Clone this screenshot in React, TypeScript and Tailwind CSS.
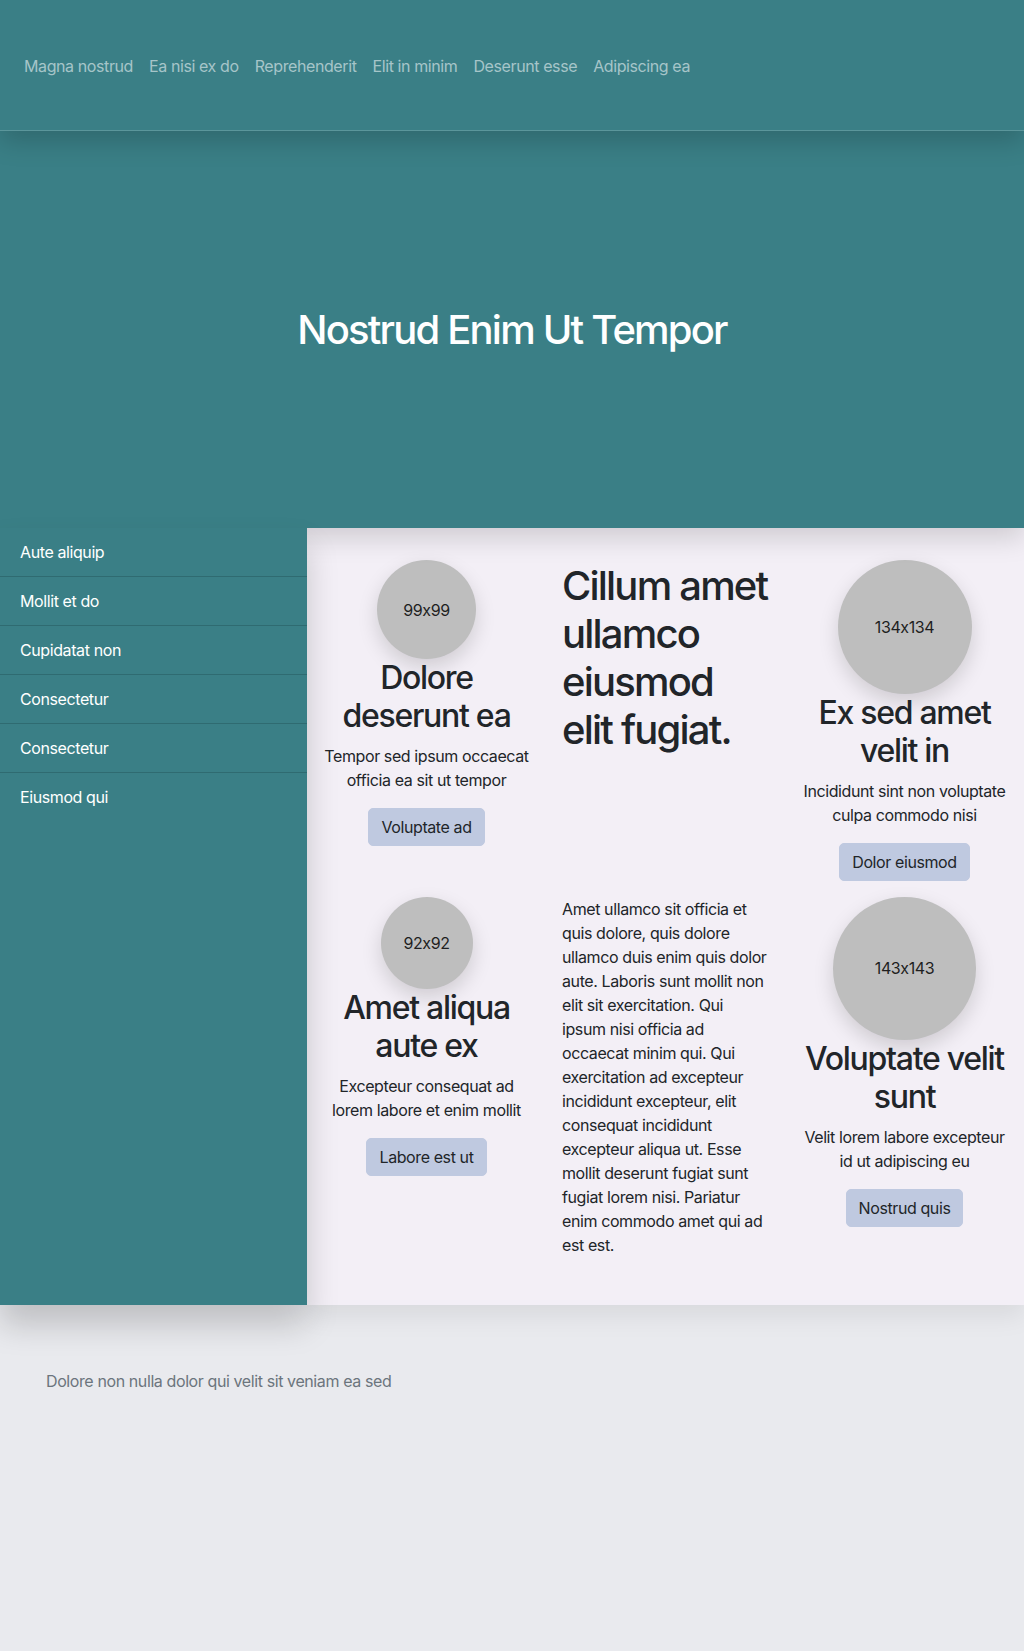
import React from "react";

const navLinks = ["Magna nostrud", "Ea nisi ex do", "Reprehenderit", "Elit in minim", "Deserunt esse", "Adipiscing ea"];
const sideLinks = ["Aute aliquip", "Mollit et do", "Cupidatat non", "Consectetur", "Consectetur", "Eiusmod qui"];

function Card({ size, title, text, action }: { size: number; title: string; text: string; action: string }) {
  return (
    <div className="flex flex-col items-center text-center">
      <div
        className="flex shrink-0 items-center justify-center rounded-full bg-[#bebebe] text-base text-[#1f1f1f] shadow-[0_8px_20px_rgba(0,0,0,0.15)] [font-feature-settings:'calt'_0]"
        style={{ width: size, height: size }}
      >
        {size}x{size}
      </div>
      <h2 className="mb-2 text-[32px] font-medium leading-[1.2] tracking-[-0.04em]">{title}</h2>
      <p className="mb-4 text-base leading-6">{text}</p>
      <button className="rounded-[5px] border border-[#bfc9e0] bg-[#bfc9e0] px-3 py-1.5 text-base leading-6 text-[#212529]">
        {action}
      </button>
    </div>
  );
}

export default function App() {
  return (
    <div className="min-h-[1651px] bg-[#e9eaee] font-['Inter',sans-serif] tracking-[-0.025em] text-[#212529]">
      <nav className="relative z-40 flex h-[131px] items-center border-b border-[#5b969b] bg-[#3a7f86] px-4 shadow-[0_10px_25px_rgba(0,0,0,0.18)]">
        {navLinks.map((l) => (
          <a key={l} href="#" className="px-2 pt-[2px] text-base text-[#a6c5c9]">
            {l}
          </a>
        ))}
      </nav>

      <section className="relative z-20 flex h-[397px] items-center justify-center bg-[#3a7f86] shadow-[0_10px_25px_rgba(0,0,0,0.15)]">
        <h1 className="text-[40px] font-medium leading-[1.2] tracking-[-0.045em] text-white">Nostrud Enim Ut Tempor</h1>
      </section>

      <div className="flex">
        <aside className="relative z-30 w-[307px] shrink-0 bg-[#3a7f86] shadow-[0_20px_30px_rgba(0,0,0,0.18)]">
          {sideLinks.map((l, i) => (
            <a
              key={i}
              href="#"
              className={
                i < sideLinks.length - 1
                  ? "block border-b border-[#2f6b71] px-5 py-3 text-base leading-6 text-white"
                  : "block px-5 py-3 text-base leading-6 text-white"
              }
            >
              {l}
            </a>
          ))}
        </aside>

        <main className="relative z-10 grid flex-1 grid-cols-3 items-start gap-x-8 gap-y-4 bg-[#f3eff6] px-4 py-8 shadow-[0_10px_25px_rgba(0,0,0,0.08)]">
          <Card size={99} title="Dolore deserunt ea" text="Tempor sed ipsum occaecat officia ea sit ut tempor" action="Voluptate ad" />
          <h1 className="mb-2 pt-[2px] text-[40px] font-medium leading-[1.2] tracking-[-0.045em]">Cillum amet ullamco eiusmod elit fugiat.</h1>
          <Card size={134} title="Ex sed amet velit in" text="Incididunt sint non voluptate culpa commodo nisi" action="Dolor eiusmod" />
          <Card size={92} title="Amet aliqua aute ex" text="Excepteur consequat ad lorem labore et enim mollit" action="Labore est ut" />
          <p className="mb-4 text-base leading-6">
            Amet ullamco sit officia et quis dolore, quis dolore ullamco duis enim quis dolor aute. Laboris sunt mollit non elit sit
            exercitation. Qui ipsum nisi officia ad occaecat minim qui. Qui exercitation ad excepteur incididunt excepteur, elit consequat
            incididunt excepteur aliqua ut. Esse mollit deserunt fugiat sunt fugiat lorem nisi. Pariatur enim commodo amet qui ad est est.
          </p>
          <Card size={143} title="Voluptate velit sunt" text="Velit lorem labore excepteur id ut adipiscing eu" action="Nostrud quis" />
        </main>
      </div>

      <footer className="pl-[46px] pt-16 text-base text-[#6c757d]">
        <p>Dolore non nulla dolor qui velit sit veniam ea sed</p>
      </footer>
    </div>
  );
}
